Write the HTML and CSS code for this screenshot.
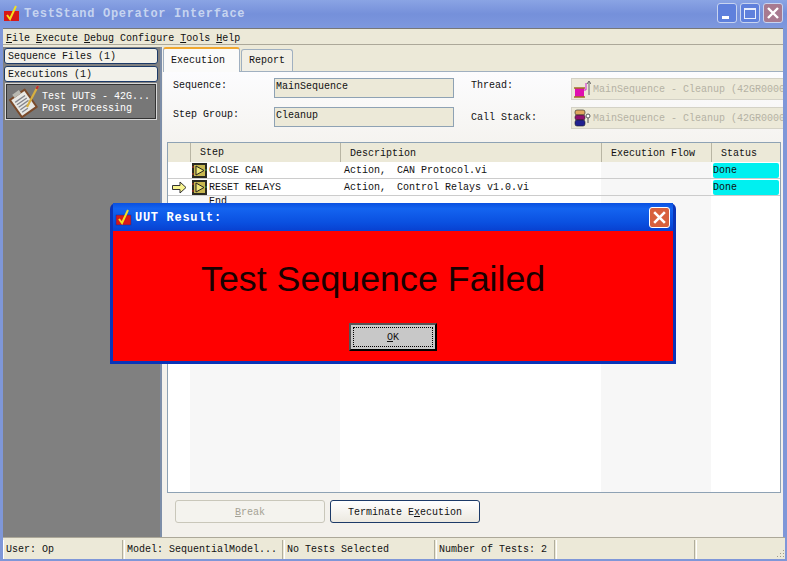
FILE: index.html
```html
<!DOCTYPE html>
<html lang="en">
<head>
    <meta charset="UTF-8">
    <title>TestStand Operator Interface</title>
    <link rel="stylesheet" href="styles.css">
</head>
<body>
    <div class="window">
        <div class="titlebar">
            <svg class="app-icon" width="16" height="18" viewBox="0 0 16 18">
                <rect x="1" y="7" width="15" height="10" fill="#d81818"/>
                <path d="M4 11l3 4 6-13" fill="none" stroke="#f4e020" stroke-width="2"/>
            </svg>
            <span class="title-text">TestStand Operator Interface</span>
            <div class="win-buttons">
                <div class="win-btn"><span class="min-bar"></span></div>
                <div class="win-btn"><span class="max-box"></span></div>
                <div class="win-btn win-close">
                    <svg width="14" height="14" viewBox="0 0 14 14"><path d="M2 2l10 10M12 2L2 12" stroke="#fff" stroke-width="2.4"/></svg>
                </div>
            </div>
        </div>
        <div class="menubar">
            <span><u>F</u>ile</span>
            <span><u>E</u>xecute</span>
            <span><u>D</u>ebug</span>
            <span>Confi<u>g</u>ure</span>
            <span><u>T</u>ools</span>
            <span><u>H</u>elp</span>
        </div>
        <div class="main">
            <div class="sidebar">
                <div class="side-btn">Sequence Files (1)</div>
                <div class="side-btn">Executions (1)</div>
                <div class="exec-item">
                    <svg class="exec-icon" width="32" height="33" viewBox="0 0 32 33">
                        <g transform="rotate(-35 15 18)">
                            <rect x="5" y="7" width="20" height="23" rx="1" fill="#7a4a2a"/>
                            <rect x="7" y="9" width="16" height="19" fill="#e8e8e4"/>
                            <path d="M9 13h12M9 16h12M9 19h12M9 22h9M9 25h7" stroke="#85858c" stroke-width="1.300"/>
                            <rect x="11" y="5" width="8" height="4" fill="#b8b8b0"/>
                        </g>
                        <path d="M30 1L19 22" stroke="#d8b040" stroke-width="2.200"/>
                        <path d="M30 1l-1.500 3" stroke="#c03030" stroke-width="2.200"/>
                    </svg>
                    <div class="exec-text">
                        <div>Test UUTs - 42G...</div>
                        <div>Post Processing</div>
                    </div>
                </div>
            </div>
            <div class="content">
                <div class="tabs">
                    <div class="tab tab-active">Execution</div>
                    <div class="tab">Report</div>
                </div>
                <div class="tab-body">
                    <div class="info-grid">
                        <div class="info-label">Sequence:</div>
                        <div class="info-value">MainSequence</div>
                        <div class="info-label">Thread:</div>
                        <div class="info-combo">
                            <svg width="18" height="18" viewBox="0 0 18 18">
                                <rect x="2" y="8" width="9" height="9" fill="#e010b0"/>
                                <path d="M1 8h11M1 17h11" stroke="#a07020" stroke-width="1.600"/>
                                <path d="M11 10h2V3" fill="none" stroke="#d020d0"/>
                                <path d="M16 15V2M14 4l2-3 2 3" fill="none" stroke="#666"/>
                            </svg>
                            <span>MainSequence - Cleanup (42GR0000</span>
                        </div>
                        <div class="info-label">Step Group:</div>
                        <div class="info-value">Cleanup</div>
                        <div class="info-label info-label-low">Call Stack:</div>
                        <div class="info-combo">
                            <svg width="18" height="18" viewBox="0 0 18 18">
                                <rect x="2" y="1" width="10" height="5" rx="2" fill="#e0a860" stroke="#222" stroke-width=".6"/>
                                <rect x="2" y="6" width="10" height="5" rx="2" fill="#901070" stroke="#222" stroke-width=".6"/>
                                <rect x="2" y="11" width="10" height="6" rx="2" fill="#202090" stroke="#222" stroke-width=".6"/>
                                <circle cx="15" cy="7" r="2" fill="#fff" stroke="#555"/>
                                <path d="M15 9v5" stroke="#555"/>
                            </svg>
                            <span>MainSequence - Cleanup (42GR0000</span>
                        </div>
                    </div>
                    <div class="steps">
                        <div class="steps-head">
                            <div class="col-gutter"></div>
                            <div class="col-step">Step</div>
                            <div class="col-desc">Description</div>
                            <div class="col-flow">Execution Flow</div>
                            <div class="col-status">Status</div>
                        </div>
                        <div class="step-row">
                            <div class="col-gutter"></div>
                            <div class="col-step">
                                <svg class="vi-icon" width="15" height="15" viewBox="0 0 15 15">
                                    <rect width="15" height="15" fill="#2a2a22"/>
                                    <rect x="2" y="2" width="11" height="11" fill="#c8b850"/>
                                    <path d="M4 3v9l8-4.500z" fill="#f0e878" stroke="#222"/>
                                    <path d="M0 4h2M0 11h2" stroke="#c03020"/>
                                    <path d="M13 7h2" stroke="#30a040"/>
                                </svg>
                                <span class="step-name">CLOSE CAN</span>
                            </div>
                            <div class="col-desc"><span class="action">Action,</span>CAN Protocol.vi</div>
                            <div class="col-flow"></div>
                            <div class="col-status"><div class="done">Done</div></div>
                        </div>
                        <div class="step-row">
                            <div class="col-gutter">
                                <svg width="15" height="13" viewBox="0 0 15 13"><path d="M.500 4.500h7.500v-3.500l6 5.500-6 5.500v-3.500H.500z" fill="#f8f490" stroke="#333"/></svg>
                            </div>
                            <div class="col-step">
                                <svg class="vi-icon" width="15" height="15" viewBox="0 0 15 15">
                                    <rect width="15" height="15" fill="#2a2a22"/>
                                    <rect x="2" y="2" width="11" height="11" fill="#c8b850"/>
                                    <path d="M4 3v9l8-4.500z" fill="#f0e878" stroke="#222"/>
                                    <path d="M0 4h2M0 11h2" stroke="#c03020"/>
                                    <path d="M13 7h2" stroke="#30a040"/>
                                </svg>
                                <span class="step-name">RESET RELAYS</span>
                            </div>
                            <div class="col-desc"><span class="action">Action,</span>Control Relays v1.0.vi</div>
                            <div class="col-flow"></div>
                            <div class="col-status"><div class="done">Done</div></div>
                        </div>
                        <div class="step-fill">
                            <div class="col-gutter"></div>
                            <div class="col-step fill-shade"><span class="end-text">End</span></div>
                            <div class="col-desc"></div>
                            <div class="col-flow fill-shade"></div>
                            <div class="col-status"></div>
                        </div>
                    </div>
                    <div class="actions">
                        <div class="btn btn-disabled"><u>B</u>reak</div>
                        <div class="btn btn-default">Terminate E<u>x</u>ecution</div>
                    </div>
                </div>
            </div>
        </div>
        <div class="statusbar">
            <div class="status-cell cell-user">User: Op</div>
            <div class="status-cell cell-model">Model: SequentialModel...</div>
            <div class="status-cell cell-tests">No Tests Selected</div>
            <div class="status-cell cell-num">Number of Tests: 2</div>
            <div class="status-cell cell-blank"></div>
            <div class="status-cell cell-grip">
                <svg width="10" height="10" viewBox="0 0 10 10"><path d="M8 1h1v1H8zM5 4h1v1H5zM8 4h1v1H8zM2 7h1v1H2zM5 7h1v1H5zM8 7h1v1H8z" fill="#a09d8c"/></svg>
            </div>
        </div>
    </div>

    <div class="dialog">
        <div class="dialog-title">
            <svg width="17" height="18" viewBox="0 0 17 18">
                <rect x="1" y="7" width="15" height="10" fill="#d81818" stroke="#0a2fa0" stroke-width=".5"/>
                <path d="M4 11l3 4 6-13" fill="none" stroke="#f4e020" stroke-width="2"/>
            </svg>
            <span class="dialog-title-text">UUT Result:</span>
            <div class="dialog-close">
                <svg width="15" height="15" viewBox="0 0 14 14"><path d="M2 2l10 10M12 2L2 12" stroke="#fff" stroke-width="2.4"/></svg>
            </div>
        </div>
        <div class="dialog-body">
            <div class="dialog-message">Test Sequence Failed</div>
            <div class="ok-btn"><span><u>O</u>K</span></div>
        </div>
    </div>
</body>
</html>
```

FILE: styles.css
```css
body {
    margin: 0;
    width: 787px;
    height: 561px;
    overflow: hidden;
    position: relative;
    font-family: "Liberation Mono", "DejaVu Sans Mono", monospace;
    font-size: 10px;
    color: #111;
    background: #fff;
}

.window {
    height: 561px;
    display: flex;
    flex-direction: column;
    background: #7f97d8;
    box-sizing: border-box;
    padding: 0 4px 2px 3px;
}

.titlebar {
    height: 28px;
    flex: none;
    display: flex;
    align-items: center;
    gap: 5px;
    box-sizing: border-box;
    margin: 0 -4px 0 -3px;
    padding: 0 4px 0 3px;
    background: linear-gradient(#8aa4e4, #7590da 50%, #7e98de);
}

.app-icon {
    margin-bottom: 2px;
}

.title-text {
    font-weight: bold;
    font-size: 12px;
    letter-spacing: 0.700px;
    color: #c6d4f0;
}

.win-buttons {
    margin-left: auto;
    margin-bottom: 2px;
    display: flex;
    gap: 3px;
}

.win-btn {
    width: 20px;
    height: 20px;
    box-sizing: border-box;
    border: 1px solid #c8d4f0;
    border-radius: 3px;
    background: #5f80dc;
    display: flex;
    align-items: center;
    justify-content: center;
    position: relative;
}

.win-close {
    background: #a87a90;
}

.min-bar {
    position: absolute;
    left: 4px;
    bottom: 3px;
    width: 7px;
    height: 3px;
    background: #fff;
}

.max-box {
    width: 10px;
    height: 8px;
    border: 1px solid #e8eefc;
    border-top-width: 2px;
}

.menubar {
    height: 17px;
    flex: none;
    box-sizing: border-box;
    display: flex;
    align-items: center;
    gap: 6px;
    padding: 3px 0 0 3px;
    background: #ece9d8;
    border-top: 1px solid #777;
    border-bottom: 1px solid #aca899;
}

.main {
    flex: 1;
    display: flex;
    min-height: 0;
    padding-top: 2px;
    background: #ece9d8;
}

.sidebar {
    width: 157px;
    flex: none;
    background: #808080;
    padding: 1px 0 0 1px;
    box-sizing: border-box;
    display: flex;
    flex-direction: column;
    gap: 2px;
}

.side-btn {
    width: 154px;
    height: 16px;
    line-height: 16px;
    padding-left: 3px;
    box-sizing: border-box;
    background: #f2f1ea;
    border: 1px solid #1c3a68;
    border-radius: 3px;
}

.exec-item {
    width: 152px;
    height: 37px;
    margin: -1px 0 0 1px;
    display: flex;
    align-items: center;
    gap: 2px;
    padding-left: 2px;
    box-sizing: border-box;
    background: #777;
    border: 1px solid #d8d8d8;
    box-shadow: inset 0 0 0 1px #333;
    color: #fff;
}

.exec-icon {
    flex: none;
}

.exec-text {
    line-height: 12px;
    margin-top: 2px;
    white-space: nowrap;
}

.content {
    flex: 1;
    min-width: 0;
    background: #f3f1ec;
    border-left: 2px solid #7d8ea8;
    padding-left: 1px;
    display: flex;
    flex-direction: column;
}

.tabs {
    display: flex;
    flex: none;
    gap: 1px;
    height: 24px;
    align-items: flex-end;
    background: #ece9d8;
}

.tab {
    width: 52px;
    height: 22px;
    line-height: 21px;
    padding-left: 7px;
    box-sizing: border-box;
    background: #f1efe6;
    border: 1px solid #a0b0c0;
    border-bottom: none;
    border-radius: 3px 3px 0 0;
}

.tab-active {
    width: 77px;
    height: 25px;
    line-height: 24px;
    margin-bottom: -1px;
    position: relative;
    background: #fbfbfa;
    border-top: 2px solid #f0a830;
}

.tab-body {
    flex: 1;
    min-height: 0;
    display: flex;
    flex-direction: column;
    border-top: 1px solid #a0b0c0;
    background: linear-gradient(#fcfcfe 0, #f3f1ec 90px);
}

.info-grid {
    display: grid;
    flex: none;
    grid-template-columns: 101px 197px 100px 212px;
    grid-template-rows: 22px 22px;
    row-gap: 7px;
    padding: 6px 0 0 10px;
    height: 70px;
    box-sizing: border-box;
}

.info-label {
    line-height: 16px;
}

.info-label-low {
    margin-top: 3px;
}

.info-value {
    width: 180px;
    height: 20px;
    line-height: 16px;
    box-sizing: border-box;
    background: #ece9d8;
    border: 1px solid #8ea2b4;
    padding-left: 1px;
}

.info-combo {
    height: 22px;
    box-sizing: border-box;
    display: flex;
    align-items: center;
    gap: 2px;
    padding-left: 1px;
    background: #ece9d8;
    border: 1px solid #d4d2c6;
    border-right: none;
    color: #b5b2a4;
    white-space: nowrap;
    overflow: hidden;
}

.info-combo svg {
    flex: none;
}

.steps {
    flex: 1;
    min-height: 0;
    margin: 0 2px 0 4px;
    border: 1px solid #8ea2b4;
    background: #fff;
    display: flex;
    flex-direction: column;
}

.steps-head, .step-row, .step-fill {
    display: flex;
    flex: none;
}

.steps-head {
    height: 19px;
    line-height: 21px;
    background: #ece9d8;
}

.steps-head > div + div {
    border-left: 1px solid #b8b5a4;
}

.step-row {
    height: 17px;
    line-height: 18px;
    box-sizing: border-box;
    border-bottom: 1px solid #ccc;
}

.step-fill {
    flex: 1;
}

.col-gutter {
    width: 22px;
    flex: none;
    display: flex;
    align-items: center;
    justify-content: center;
}

.col-step {
    width: 150px;
    flex: none;
    display: flex;
    align-items: center;
    padding-left: 2px;
    box-sizing: border-box;
}

.steps-head .col-step,
.steps-head .col-desc,
.steps-head .col-flow,
.steps-head .col-status {
    padding-left: 9px;
    box-sizing: border-box;
}

.vi-icon {
    flex: none;
    margin-right: 2px;
}

.step-name {
    padding-top: 1px;
    line-height: 15px;
}

.end-text {
    margin: 0 0 0 17px;
    align-self: flex-start;
    line-height: 12px;
}

.col-desc {
    width: 261px;
    flex: none;
    padding-left: 4px;
    box-sizing: border-box;
}

.action {
    display: inline-block;
    width: 53px;
}

.col-flow {
    width: 110px;
    flex: none;
    background: #f7f7f7;
}

.steps-head .col-flow {
    background: none;
}

.fill-shade {
    background: #f7f7f7;
}

.col-status {
    flex: 1;
    min-width: 0;
}

.done {
    height: 15px;
    margin: 1px 1px 0 2px;
    line-height: 15px;
    background: #00f0f0;
    border-radius: 2px;
}

.actions {
    height: 44px;
    flex: none;
    display: flex;
    gap: 5px;
    padding: 7px 0 0 12px;
    box-sizing: border-box;
}

.btn {
    width: 150px;
    height: 23px;
    line-height: 23px;
    box-sizing: border-box;
    text-align: center;
    border-radius: 3px;
    background: #f4f3ee;
}

.btn-disabled {
    border: 1px solid #c9c7ba;
    color: #a5a294;
}

.btn-default {
    border: 1px solid #1c3a68;
    background: linear-gradient(#fff, #ece9e0);
}

.statusbar {
    height: 22px;
    flex: none;
    display: flex;
    gap: 1px;
    padding-top: 2px;
    box-sizing: border-box;
    background: #ece9d8;
    border-top: 1px solid #aca899;
    margin-right: -2px;
}

.status-cell {
    border-left: 1px solid #fff;
    border-right: 1px solid #b0ad9c;
    line-height: 20px;
    padding-left: 2px;
    box-sizing: border-box;
    white-space: nowrap;
    overflow: hidden;
}

.cell-user { width: 120px; }
.cell-model { width: 159px; }
.cell-tests { width: 151px; }
.cell-num { width: 119px; }
.cell-blank { width: 139px; }

.cell-grip {
    flex: 1;
    border-right: none;
    display: flex;
    justify-content: flex-end;
    align-items: flex-end;
}

.dialog {
    position: absolute;
    left: 110px;
    top: 203px;
    width: 566px;
    height: 161px;
    box-sizing: border-box;
    background: #0a34b8;
    border-radius: 6px 6px 0 0;
    padding: 0 3px 3px;
    display: flex;
    flex-direction: column;
}

.dialog-title {
    height: 28px;
    flex: none;
    display: flex;
    align-items: center;
    gap: 3px;
    padding-left: 2px;
    position: relative;
    background: linear-gradient(#0a50e0, #1464f0 20%, #0a50e0 70%, #0840d0);
}

.dialog-title-text {
    padding-top: 2px;
    color: #fff;
    font-weight: bold;
    font-size: 12px;
    letter-spacing: 0.700px;
}

.dialog-close {
    position: absolute;
    right: 3px;
    top: 4px;
    width: 21px;
    height: 21px;
    box-sizing: border-box;
    border: 1px solid #fff;
    border-radius: 3px;
    background: #d8603c;
    display: flex;
    align-items: center;
    justify-content: center;
}

.dialog-body {
    flex: 1;
    background: #ff0000;
    display: flex;
    flex-direction: column;
    align-items: center;
    padding-top: 29px;
    box-sizing: border-box;
}

.dialog-message {
    width: 100%;
    padding-left: 88px;
    box-sizing: border-box;
    font-family: "Liberation Sans", Arial, sans-serif;
    font-size: 35.800px;
    line-height: 38px;
    color: #1a0000;
}

.ok-btn {
    width: 88px;
    height: 28px;
    margin-top: 25px;
    box-sizing: border-box;
    background: #c8c8c8;
    border: 2px solid #000;
    border-color: #555 #000 #000 #555;
    padding: 2px;
}

.ok-btn span {
    display: block;
    height: 100%;
    box-sizing: border-box;
    border: 1px dotted #000;
    text-align: center;
    line-height: 20px;
}
```
